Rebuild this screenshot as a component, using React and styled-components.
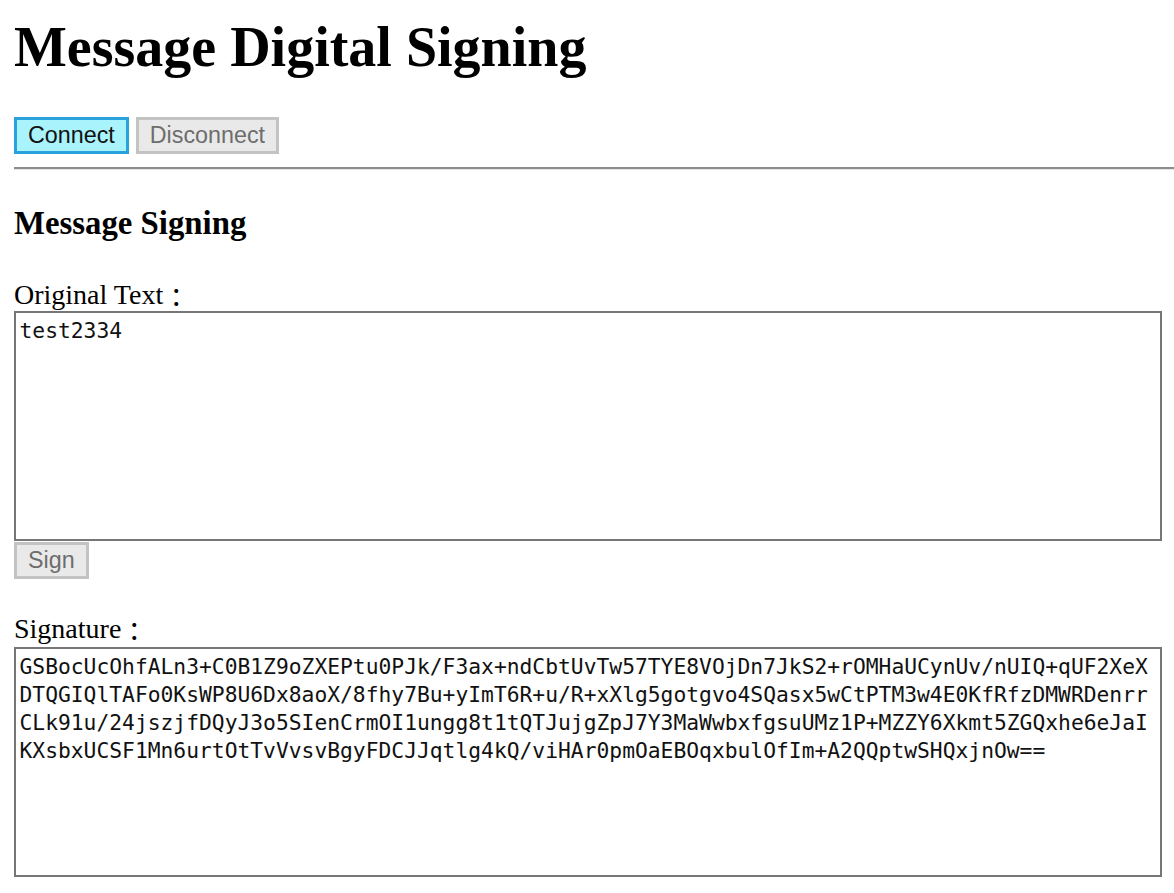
import React, { useState } from 'react';
import styled, { createGlobalStyle } from 'styled-components';

const SIGNATURE =
  "GSBocUcOhfALn3+C0B1Z9oZXEPtu0PJk/F3ax+ndCbtUvTw57TYE8VOjDn7JkS2+rOMHaUCynUv/nUIQ+qUF2XeX" +
  "DTQGIQlTAFo0KsWP8U6Dx8aoX/8fhy7Bu+yImT6R+u/R+xXlg5gotgvo4SQasx5wCtPTM3w4E0KfRfzDMWRDenrr" +
  "CLk91u/24jszjfDQyJ3o5SIenCrmOI1ungg8t1tQTJujgZpJ7Y3MaWwbxfgsuUMz1P+MZZY6Xkmt5ZGQxhe6eJaI" +
  "KXsbxUCSF1Mn6urtOtTvVvsvBgyFDCJJqtlg4kQ/viHAr0pmOaEBOqxbulOfIm+A2QQptwSHQxjnOw==";

const GlobalStyle = createGlobalStyle`
  body {
    margin: 0;
    background: #fff;
    font-family: "Liberation Serif", "Noto Sans CJK TC", serif;
    color: #000;
  }
`;

const Page = styled.div`
  display: flex;
  flex-direction: column;
  align-items: flex-start;
  padding-left: 14px;
  overflow: hidden;
`;

const Title = styled.h1`
  margin: 15px 0 0;
  font-size: 56px;
  line-height: 64px;
  font-weight: 700;
`;

const Toolbar = styled.div`
  display: flex;
  gap: 7px;
  margin-top: 38px;
`;

const Button = styled.button`
  font-family: "Liberation Sans", Arial, sans-serif;
  font-size: 23.3px;
  line-height: 27px;
  padding: 2px 11px;
  border: 3px solid ${p => (p.$active ? '#2aa3dd' : '#c3c3c3')};
  background: ${p => (p.$active ? '#a9f3fd' : '#e9e9e9')};
  color: ${p => (p.$active ? '#111' : '#6d6d6d')};
  margin: ${p => p.$margin || '0'};
  cursor: ${p => (p.disabled ? 'default' : 'pointer')};
`;

const Rule = styled.hr`
  align-self: stretch;
  margin: 13px 0 0;
  border: none;
  border-top: 2px solid #8c8c8c;
  border-bottom: 1px solid #e6e6e6;
  height: 0;
`;

const SectionTitle = styled.h3`
  margin: 34px 0 0;
  font-size: 32.8px;
  line-height: 38px;
  font-weight: 700;
`;

const Label = styled.label`
  display: block;
  height: 32px;
  font-size: 28px;
  line-height: 32px;
  margin-top: ${p => p.$top};
`;

const Colon = styled.span`
  font-family: "Noto Sans CJK TC", sans-serif;
  font-size: 26px;
  line-height: 0;
  vertical-align: -3px;
`;

const TextBox = styled.textarea`
  display: block;
  box-sizing: border-box;
  width: 1148px;
  height: ${p => p.$height};
  margin-top: ${p => p.$top || '0'};
  padding: 3.5px;
  border: 2px solid #767676;
  font-family: "DejaVu Sans Mono", "Liberation Mono", monospace;
  font-size: 21.3px;
  line-height: 28px;
  color: #111;
  background: #fff;
  resize: none;
  overflow: hidden;
  word-break: break-all;
  outline: none;
`;

export default function App() {
  const [text, setText] = useState('test2334');
  const [signature, setSignature] = useState(SIGNATURE);

  return (
    <Page>
      <GlobalStyle />
      <Title>Message Digital Signing</Title>
      <Toolbar>
        <Button $active>Connect</Button>
        <Button disabled>Disconnect</Button>
      </Toolbar>
      <Rule />
      <SectionTitle>Message Signing</SectionTitle>
      <Label $top="37px" htmlFor="original">Original Text<Colon>：</Colon></Label>
      <TextBox id="original" $height="230px" value={text} onChange={e => setText(e.target.value)} />
      <Button disabled $margin="1px 0 0">Sign</Button>
      <Label $top="34px" htmlFor="signature">Signature<Colon>：</Colon></Label>
      <TextBox id="signature" $height="230px" $top="2px" value={signature} onChange={e => setSignature(e.target.value)} />
    </Page>
  );
}
